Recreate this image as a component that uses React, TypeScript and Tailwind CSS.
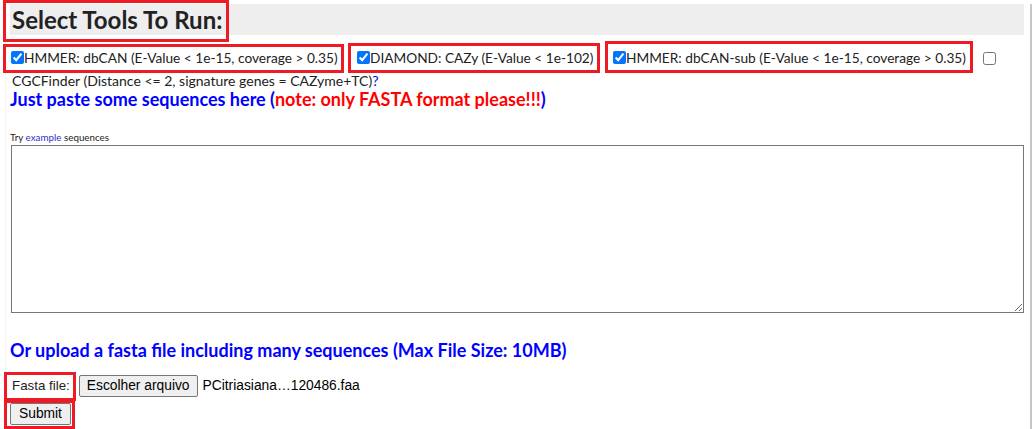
import React from "react";

export default function App() {
  return (
    <div className="relative w-[1032px] h-[429px] overflow-hidden bg-white font-['Lato',_'Noto_Sans',_sans-serif] text-[#222]">
      <div className="ml-[5px] mt-[4px] w-[1027px] h-[425px] border-l border-l-[#f4f4f4] border-r-2 border-r-[#c6c6c6] pl-[4px] pr-[6px]">
        {/* header */}
        <div className="mt-[1px] h-[31px] bg-[#eeeeee] flex items-center pl-[2px]">
          <h2 className="text-[24px] font-bold leading-none text-[#222]">Select Tools To Run:</h2>
        </div>

        {/* tools row */}
        <div className="mt-[9px] h-[28px] flex items-center text-[13.7px] leading-none">
          <label className="flex items-center ml-[1px] w-[346px]">
            <input type="checkbox" defaultChecked className="w-[13px] h-[13px] m-0" />
            <span>HMMER: dbCAN (E-Value &lt; 1e-15, coverage &gt; 0.35)</span>
          </label>
          <label className="flex items-center w-[256px]">
            <input type="checkbox" defaultChecked className="w-[13px] h-[13px] m-0" />
            <span>DIAMOND: CAZy (E-Value &lt; 1e-102)</span>
          </label>
          <label className="flex items-center w-[370px]">
            <input type="checkbox" defaultChecked className="w-[13px] h-[13px] m-0" />
            <span>HMMER: dbCAN-sub (E-Value &lt; 1e-15, coverage &gt; 0.35)</span>
          </label>
          <input type="checkbox" className="w-[13px] h-[13px] m-0" />
        </div>
        <div className="h-[17px] leading-[17px] text-[14px] pl-[2px]">
          CGCFinder (Distance &lt;= 2, signature genes = CAZyme+TC)<span className="text-[#0000ee]">?</span>
        </div>

        {/* paste heading */}
        <h4 className="h-[20px] leading-[20px] text-[18px] font-bold text-[#0000ff]">
          Just paste some sequences here (<span className="text-[#ff0000]">note: only FASTA format please!!!</span>)
        </h4>

        <div className="mt-[21px] h-[14px] leading-[14px] text-[9.8px]">
          Try <span className="text-[#3333cc]">example</span> sequences
        </div>

        <textarea className="mt-[1px] ml-[1px] block w-[1013px] h-[168px] border border-[#767676] bg-white" />

        <h4 className="mt-[27px] h-[20px] leading-[20px] text-[18px] font-bold text-[#0000ff]">
          Or upload a fasta file including many sequences (Max File Size: 10MB)
        </h4>

        <div className="mt-[11px] h-[28px] flex items-center font-['Liberation_Sans',_Arial,_sans-serif] text-[13.33px] text-[#222]">
          <span className="ml-[2px] mt-[2px]">Fasta file:</span>
          <span className="ml-[9px] mt-[2px] h-[22px] flex items-center px-[7px] bg-[#efefef] border border-[#767676] rounded-[2px] text-black text-[13.8px]">Escolher arquivo</span>
          <span className="ml-[5px] mt-[2px] text-black text-[13.8px]">PCitriasiana…120486.faa</span>
        </div>
        <div className="h-[28px] flex items-center font-['Liberation_Sans',_Arial,_sans-serif] text-[13.8px]">
          <button className="mt-[1px] h-[22px] px-[8px] bg-[#efefef] border border-[#767676] rounded-[2px] text-black">Submit</button>
        </div>
      </div>

      {/* red annotation boxes */}
      <div className="absolute left-[3px] top-0 w-[226px] h-[42px] border-[3px] border-[#ed1c24]" />
      <div className="absolute left-[3px] top-[44px] w-[341px] h-[29px] border-[3px] border-[#ed1c24]" />
      <div className="absolute left-[348px] top-[43px] w-[252px] h-[30px] border-[3px] border-[#ed1c24]" />
      <div className="absolute left-[605px] top-[41px] w-[368px] h-[32px] border-[3px] border-[#ed1c24]" />
      <div className="absolute left-[4px] top-[372px] w-[72px] h-[29px] border-[3px] border-[#ed1c24]" />
      <div className="absolute left-[4px] top-[400px] w-[71px] h-[29px] border-[3px] border-[#ed1c24]" />
    </div>
  );
}
